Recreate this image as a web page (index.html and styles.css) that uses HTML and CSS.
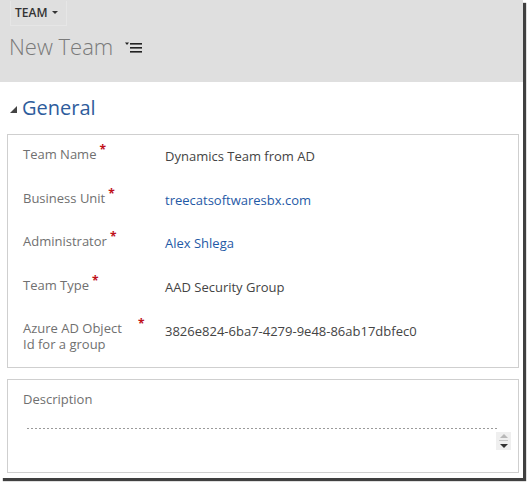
FILE: index.html
```html
<!DOCTYPE html>
<html>
<head>
<meta charset="utf-8">
<link rel="stylesheet" href="styles.css">
</head>
<body>
<div class="frame">
  <header class="header">
    <div class="entity-btn"><span class="entity-name">TEAM</span><span class="caret"></span></div>
    <div class="title-row">
      <h1 class="title">New Team</h1>
      <svg class="menu-icon" width="18" height="12" viewBox="0 0 18 12">
        <polygon points="0,0.5 4,0.5 2,3" fill="#222"/>
        <rect x="5" y="1" width="12" height="1.6" fill="#222"/>
        <rect x="5" y="5" width="12" height="1.6" fill="#222"/>
        <rect x="5" y="9" width="12" height="1.6" fill="#222"/>
      </svg>
    </div>
  </header>
  <main class="content">
    <div class="section-head">
      <svg class="tri" width="8" height="8" viewBox="0 0 8 8"><polygon points="7,0 7,7 0,7" fill="#444"/></svg>
      <h2 class="section-title">General</h2>
    </div>
    <section class="box fields">
      <div class="row">
        <div class="label"><span class="ltext">Team Name</span><span class="req">*</span></div>
        <div class="value">Dynamics Team from AD</div>
      </div>
      <div class="row">
        <div class="label"><span class="ltext">Business Unit</span><span class="req">*</span></div>
        <div class="value link">treecatsoftwaresbx.com</div>
      </div>
      <div class="row">
        <div class="label"><span class="ltext">Administrator</span><span class="req">*</span></div>
        <div class="value link">Alex Shlega</div>
      </div>
      <div class="row">
        <div class="label"><span class="ltext">Team Type</span><span class="req">*</span></div>
        <div class="value">AAD Security Group</div>
      </div>
      <div class="row">
        <div class="label"><span class="ltext wrap">Azure AD Object Id for a group</span><span class="req">*</span></div>
        <div class="value v-wrap">3826e824-6ba7-4279-9e48-86ab17dbfec0</div>
      </div>
    </section>
    <section class="box desc">
      <div class="label desc-label"><span class="ltext">Description</span></div>
      <div class="desc-field">
        <div class="dotted"></div>
        <div class="spinner">
          <span class="up"></span>
          <span class="sep"></span>
          <span class="down"></span>
        </div>
      </div>
    </section>
  </main>
</div>
</body>
</html>
```
FILE: styles.css
```css
html, body {
  margin: 0;
  padding: 0;
  background: #ffffff;
}
body {
  font-family: "Open Sans", "Noto Sans", "Liberation Sans", sans-serif;
  width: 528px;
  height: 484px;
  overflow: hidden;
}
.frame {
  width: 523px;
  height: 478px;
  background: #ffffff;
  box-shadow: 3px 3px 1px rgba(0,0,0,0.75);
  overflow: hidden;
}
.header {
  height: 82px;
  background: #dfdfdf;
  box-sizing: border-box;
}
.entity-btn {
  display: inline-flex;
  align-items: center;
  margin-left: 10px;
  height: 25px;
  padding: 0 8px 0 4px;
  box-sizing: border-box;
  border: 1px solid #e6e6e6;
  border-top: none;
}
.entity-name {
  font-size: 12px;
  font-weight: 600;
  color: #333;
}
.caret {
  margin-left: 5px;
  width: 0;
  height: 0;
  border-left: 3px solid transparent;
  border-right: 3px solid transparent;
  border-top: 3px solid #333;
}
.title-row {
  display: flex;
  align-items: center;
  margin-left: 9px;
  margin-top: 5px;
  height: 30px;
}
.title {
  margin: 0;
  font-size: 22px;
  font-weight: 300;
  color: #7a7a7a;
  line-height: 30px;
}
.menu-icon {
  margin-left: 12px;
  margin-top: 4px;
}
.content {
  padding: 14px 0 0 7px;
}
.section-head {
  display: flex;
  align-items: center;
  height: 24px;
}
.tri {
  margin-left: 3px;
  margin-top: 4px;
}
.section-title {
  margin: 0 0 0 4px;
  font-size: 20px;
  font-weight: 400;
  color: #2e5c9c;
  line-height: 24px;
}
.box {
  width: 512px;
  box-sizing: border-box;
  border: 1px solid #cfcfcf;
}
.fields {
  margin-top: 14px;
  padding: 11px 14px 15px 15px;
  display: flex;
  flex-direction: column;
  gap: 25.5px;
}
.row {
  display: grid;
  grid-template-columns: 142px 1fr;
  height: 18px;
}
.row:last-child {
  height: 32px;
}
.label {
  display: flex;
  align-items: flex-start;
  font-size: 13px;
  line-height: 16px;
  color: #707070;
}
.ltext.wrap {
  width: 112px;
}
.req {
  color: #c0101a;
  font-size: 12px;
  line-height: 8px;
  margin-left: 3px;
  font-weight: 700;
}
.value {
  font-size: 13px;
  line-height: 16px;
  color: #444;
  padding-top: 2px;
}
.value.v-wrap {
  padding-top: 3px;
}
.link {
  color: #1f5aa6;
}
.desc {
  margin-top: 11px;
  height: 94px;
  padding: 11px 14px 0 15px;
}
.desc-label {
  line-height: 16px;
}
.desc-field {
  position: relative;
  margin-top: 21px;
  margin-left: 4px;
  width: 472px;
}
.dotted {
  height: 1px;
  background: repeating-linear-gradient(to right, #9a9a9a 0, #9a9a9a 2px, transparent 2px, transparent 4px);
}
.spinner {
  position: absolute;
  right: -12px;
  top: 4px;
  width: 15px;
  height: 18px;
  background: #efefef;
  display: flex;
  flex-direction: column;
  align-items: center;
}
.up {
  margin-top: 2px;
  width: 0;
  height: 0;
  border-left: 4px solid transparent;
  border-right: 4px solid transparent;
  border-bottom: 4px solid #b8b8b8;
}
.sep {
  margin-top: 2px;
  width: 9px;
  height: 1px;
  background: #c8c8c8;
}
.down {
  margin-top: 3px;
  width: 0;
  height: 0;
  border-left: 4px solid transparent;
  border-right: 4px solid transparent;
  border-top: 4px solid #333;
}
```
